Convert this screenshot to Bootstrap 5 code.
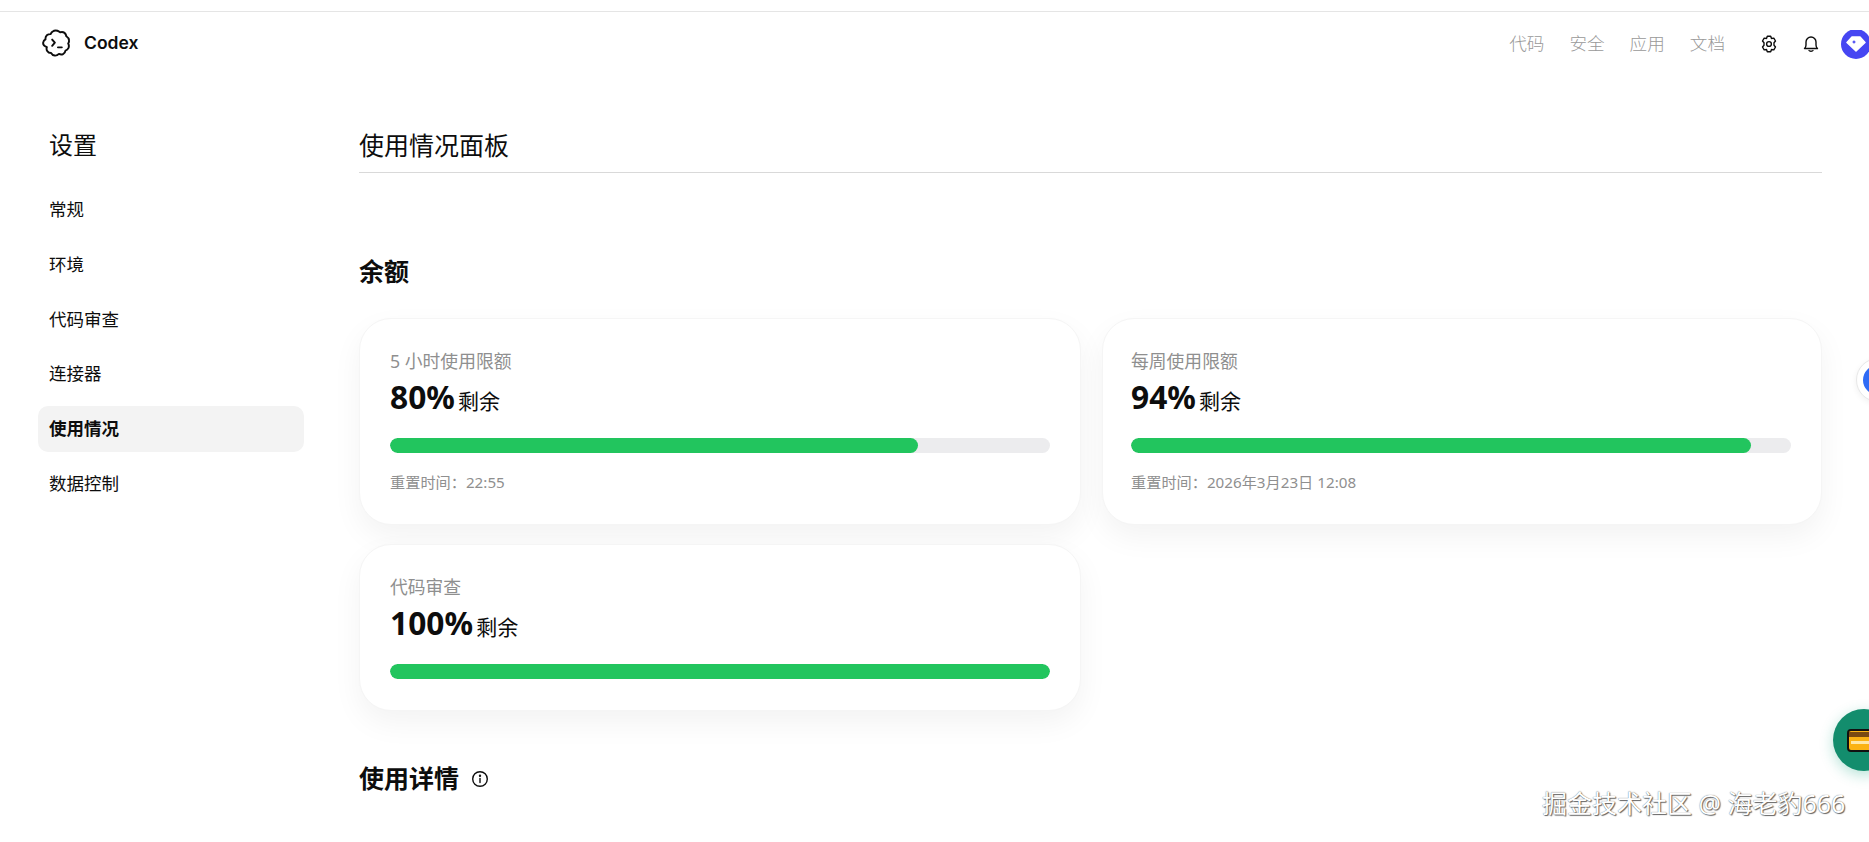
<!DOCTYPE html>
<html lang="zh-CN">
<head>
  <meta charset="UTF-8">
  <meta name="viewport" content="width=device-width, initial-scale=1.0">
  <title>Codex 使用情况</title>
  <link href="https://cdn.jsdelivr.net/npm/bootstrap@5.3.0/dist/css/bootstrap.min.css" rel="stylesheet">
  <style>
    html, body { height: 842px; overflow: hidden; }
    body { font-family: "Noto Sans", "Noto Sans CJK SC", sans-serif; background: #fff; color: #0d0d0d; position: relative; }
    .top-strip { height: 12px; border-bottom: 1px solid #e5e5e5; }
    .site-head { height: 64px; padding-left: 42px; }
    .brand-wrap { margin-top: -2px; }
    .brand-name { font-family: Inter, sans-serif; font-weight: 600; font-size: 17.5px; margin-left: 13px; }
    .head-links { gap: 25px; margin-right: 23px; }
    .head-links a { color: #999; font-size: 17.6px; font-weight: 300; text-decoration: none; line-height: 1; }
    .head-icons { gap: 24px; width: 121px; padding-left: 12px; overflow: hidden; }
    .head-icons svg { flex: none; }
    .avatar-dot { flex: none; width: 30px; height: 30px; border-radius: 50%; background: #4646f2; margin-left: -3px; margin-top: -1px; }
    .page-body { padding-left: 38px; padding-right: 47px; }
    .side-col { width: 266px; flex: none; margin-right: 55px; }
    .side-title { font-size: 24px; font-weight: 400; margin: 51px 0 24px 11px; line-height: 36px; }
    .side-list { border: 0; gap: 8.8px; }
    .side-list .list-group-item { border: 0; border-radius: 10px; padding: 0 11px; height: 46px; line-height: 44px; font-size: 17.5px; color: #0d0d0d; background: transparent; }
    .side-list .list-group-item.active { background: #f3f3f3; font-weight: 700; color: #0d0d0d; margin: 0; }
    .main-col { flex: 1; min-width: 0; }
    .main-title { font-size: 25px; font-weight: 400; line-height: 37px; margin: 51px 0 0; padding-bottom: 8px; border-bottom: 1px solid #d9d9d9; }
    .sect-title { font-size: 25px; font-weight: 700; line-height: 37px; margin: 0; }
    .sect-title.sect-first { margin-top: 80px; }
    .quota-grid { display: grid; grid-template-columns: 722px 720px; gap: 19px 21px; margin-top: 28px; margin-bottom: 49px; }
    .quota-card { border: 1px solid #f5f5f5; border-radius: 32px; padding: 29px 30px 31px; box-shadow: 0 12px 30px rgba(0, 0, 0, .05); background: #fff; }
    .quota-card-wide { padding-left: 28px; }
    .quota-label { font-size: 17.8px; color: #8f8f8f; line-height: 26px; }
    .quota-big { line-height: 44px; margin-top: 1px; }
    .quota-num { font-size: 31.7px; font-weight: 700; }
    .quota-unit { font-size: 21px; margin-left: -1px; }
    .quota-bar { height: 15px; border-radius: 8px; background: #ececee; margin-top: 13px; }
    .quota-bar .progress-bar { background: #22c55e; border-radius: 8px; }
    .quota-reset { font-size: 15.2px; color: #8f8f8f; line-height: 22px; margin-top: 18px; }
    .watermark { position: absolute; left: 1542px; top: 785px; font-size: 25px; color: #fff; line-height: 36px; text-shadow: 0 0 1px #555, 1px 1px 1px #666; white-space: nowrap; }
    .float-green { position: absolute; left: 1833px; top: 709px; width: 62px; height: 62px; border-radius: 50%; background: #138d6d; box-shadow: 0 4px 14px rgba(16, 163, 127, .3); }
    .float-green svg { position: absolute; left: 14px; top: 20px; }
    .float-blue { position: absolute; left: 1856px; top: 358px; width: 44px; height: 44px; border-radius: 50%; background: #fff; border: 1px solid #e8e8e8; box-shadow: 0 2px 6px rgba(0, 0, 0, .06); }
    .float-blue i { display: block; width: 30px; height: 30px; border-radius: 50%; background: #2f6bf5; margin: 6px; }
  </style>
</head>
<body>
<div class="top-strip"></div>

<header class="site-head d-flex align-items-center justify-content-between">
  <div class="brand-wrap d-flex align-items-center">
    <svg width="29" height="29" viewBox="0 0 30 30" fill="none" stroke="#0d0d0d" stroke-width="2" stroke-linecap="round" stroke-linejoin="round">
      <path d="M11 2.700c1.500-1.300 3.300-1.500 5-.9 1.200.4 2 1 2.800 1.600 1.400-.5 3.200-.4 4.500.6 1.200.9 1.700 2.200 1.900 3.500 1.300.8 2.700 2 2.800 4.300.1 1.500-.4 2.400-.9 3.200.8 1.400 1 3.100.2 4.800-.7 1.400-1.800 2.200-3 2.600-.2 1.400-1 2.800-2.500 3.500-1.700.8-3.100.4-4.300-.1-1.100 1.100-2.500 1.900-4.300 1.700-1.900-.2-3.100-1.300-3.800-2.600-1.500 0-3.100-.6-4-2.100-.9-1.500-.8-2.900-.4-4.100C1.500 17.400.9 16 1.200 14.100c.3-1.700 1.300-2.700 2.400-3.300-.2-1.600.2-3.300 1.700-4.500 1.300-1 2.500-1.100 3.600-1 .5-1 1.100-1.800 2.100-2.600z"/>
      <path d="M10.500 11l2.800 3.200-2.800 3.200M16.500 19h4"/>
    </svg>
    <span class="brand-name">Codex</span>
  </div>
  <div class="d-flex align-items-center">
    <nav class="head-links d-flex">
      <a href="#">代码</a><a href="#">安全</a><a href="#">应用</a><a href="#">文档</a>
    </nav>
    <div class="head-icons d-flex align-items-center">
      <svg width="18" height="18" viewBox="0 0 18 18" fill="none" stroke="#0d0d0d" stroke-width="1.400" stroke-linejoin="round">
        <path d="M7.300 1.300h3.400l.8 2.200 2.300-.4 1.700 2.900L14 7.700v2.600l1.500 1.700-1.700 2.900-2.300-.4-.8 2.200H7.300l-.8-2.200-2.300.4-1.700-2.900L4 10.300V7.700L2.500 6l1.700-2.900 2.300.4z"/>
        <circle cx="9" cy="9" r="2.400"/>
      </svg>
      <svg width="18" height="18" viewBox="0 0 18 18" fill="none" stroke="#0d0d0d" stroke-width="1.400" stroke-linecap="round" stroke-linejoin="round">
        <path d="M2.500 13.500c1-.8 1.500-2 1.500-3.500V7a5 5 0 0 1 10 0v3c0 1.500.5 2.700 1.500 3.500z"/>
        <path d="M7 15.500c.5.900 3.500.9 4 0"/>
      </svg>
      <div class="avatar-dot d-flex align-items-center justify-content-center">
        <svg width="20" height="18" viewBox="0 0 20 18">
          <path d="M6 2h8l5 5.500L10 16 1 7.500z" fill="#fff" stroke="#fff" stroke-linejoin="round" stroke-width="1.500"/>
          <path d="M8 5l.7 1.300L10 7l-1.300.7L8 9l-.7-1.300L6 7l1.300-.7z" fill="#4646f2"/>
        </svg>
      </div>
    </div>
  </div>
</header>

<div class="page-body d-flex">
  <aside class="side-col">
    <h1 class="side-title">设置</h1>
    <div class="list-group side-list">
      <a href="#" class="list-group-item">常规</a>
      <a href="#" class="list-group-item">环境</a>
      <a href="#" class="list-group-item">代码审查</a>
      <a href="#" class="list-group-item">连接器</a>
      <a href="#" class="list-group-item active">使用情况</a>
      <a href="#" class="list-group-item">数据控制</a>
    </div>
  </aside>

  <main class="main-col">
    <h2 class="main-title">使用情况面板</h2>

    <h3 class="sect-title sect-first">余额</h3>
    <div class="quota-grid">
      <div class="quota-card">
        <div class="quota-label">5 小时使用限额</div>
        <div class="quota-big"><span class="quota-num">80%</span> <span class="quota-unit">剩余</span></div>
        <div class="progress quota-bar"><div class="progress-bar" style="width: 80%"></div></div>
        <div class="quota-reset">重置时间：22:55</div>
      </div>
      <div class="quota-card quota-card-wide">
        <div class="quota-label">每周使用限额</div>
        <div class="quota-big"><span class="quota-num">94%</span> <span class="quota-unit">剩余</span></div>
        <div class="progress quota-bar"><div class="progress-bar" style="width: 94%"></div></div>
        <div class="quota-reset">重置时间：2026年3月23日 12:08</div>
      </div>
      <div class="quota-card">
        <div class="quota-label">代码审查</div>
        <div class="quota-big"><span class="quota-num">100%</span> <span class="quota-unit">剩余</span></div>
        <div class="progress quota-bar"><div class="progress-bar" style="width: 100%"></div></div>
      </div>
    </div>

    <h3 class="sect-title d-flex align-items-center gap-2">使用详情
      <svg class="ms-1" width="18" height="18" viewBox="0 0 18 18" fill="none" stroke="#0d0d0d" stroke-width="1.400" stroke-linecap="round">
        <circle cx="9" cy="9" r="7.300"/>
        <path d="M9 8.500v4"/>
        <circle cx="9" cy="5.700" r=".5" fill="#0d0d0d"/>
      </svg>
    </h3>
  </main>
</div>

<div class="float-blue"><i></i></div>
<div class="float-green">
  <svg width="40" height="24" viewBox="0 0 40 24">
    <rect x="1" y="1" width="38" height="21" rx="3" fill="#fbb314" stroke="#111" stroke-width="2"/>
    <rect x="2" y="3" width="36" height="5" fill="#7a4a12"/>
    <rect x="4" y="12" width="32" height="3" fill="#ffe9a8"/>
  </svg>
</div>
<div class="watermark">掘金技术社区 @ 海老豹666</div>
</body>
</html>
